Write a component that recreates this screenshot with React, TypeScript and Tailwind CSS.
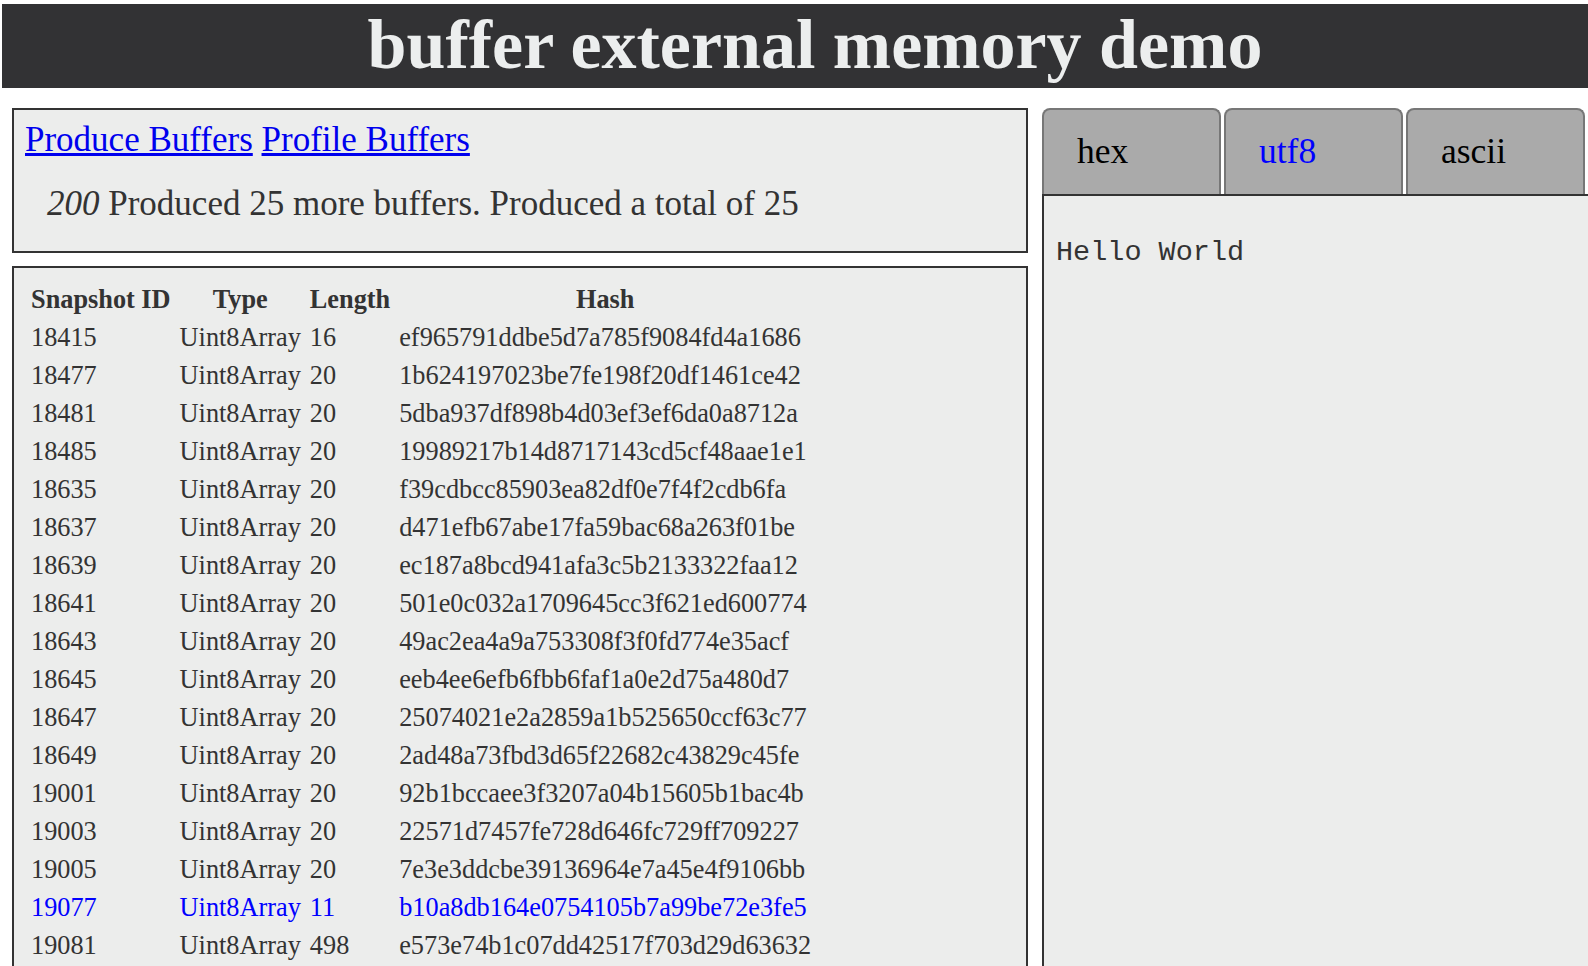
import React from "react";

type Row = { id: string; type: string; length: string; hash: string; active?: boolean };

const rows: Row[] = [
    { id: "18415", type: "Uint8Array", length: "16", hash: "ef965791ddbe5d7a785f9084fd4a1686" },
    { id: "18477", type: "Uint8Array", length: "20", hash: "1b624197023be7fe198f20df1461ce42" },
    { id: "18481", type: "Uint8Array", length: "20", hash: "5dba937df898b4d03ef3ef6da0a8712a" },
    { id: "18485", type: "Uint8Array", length: "20", hash: "19989217b14d8717143cd5cf48aae1e1" },
    { id: "18635", type: "Uint8Array", length: "20", hash: "f39cdbcc85903ea82df0e7f4f2cdb6fa" },
    { id: "18637", type: "Uint8Array", length: "20", hash: "d471efb67abe17fa59bac68a263f01be" },
    { id: "18639", type: "Uint8Array", length: "20", hash: "ec187a8bcd941afa3c5b2133322faa12" },
    { id: "18641", type: "Uint8Array", length: "20", hash: "501e0c032a1709645cc3f621ed600774" },
    { id: "18643", type: "Uint8Array", length: "20", hash: "49ac2ea4a9a753308f3f0fd774e35acf" },
    { id: "18645", type: "Uint8Array", length: "20", hash: "eeb4ee6efb6fbb6faf1a0e2d75a480d7" },
    { id: "18647", type: "Uint8Array", length: "20", hash: "25074021e2a2859a1b525650ccf63c77" },
    { id: "18649", type: "Uint8Array", length: "20", hash: "2ad48a73fbd3d65f22682c43829c45fe" },
    { id: "19001", type: "Uint8Array", length: "20", hash: "92b1bccaee3f3207a04b15605b1bac4b" },
    { id: "19003", type: "Uint8Array", length: "20", hash: "22571d7457fe728d646fc729ff709227" },
    { id: "19005", type: "Uint8Array", length: "20", hash: "7e3e3ddcbe39136964e7a45e4f9106bb" },
    { id: "19077", type: "Uint8Array", length: "11", hash: "b10a8db164e0754105b7a99be72e3fe5", active: true },
    { id: "19081", type: "Uint8Array", length: "498", hash: "e573e74b1c07dd42517f703d29d63632" },
];

const tabs = [
    { label: "hex", active: false },
    { label: "utf8", active: true },
    { label: "ascii", active: false },
];

export default function App() {
    return (
        <div className="h-[966px] overflow-hidden bg-white font-['Liberation_Serif','Times_New_Roman',serif] text-[#333]">
            {/* Title bar */}
            <header className="ml-[2px] mt-[4px] h-[84px] bg-[#323234] pl-[40px] pt-[6px] text-center">
                <h1 className="text-[70px] font-bold leading-[70px] text-[#eceeee]">buffer external memory demo</h1>
            </header>

            <div className="ml-[12px] mt-[20px] flex gap-[14px]">
                {/* Left column */}
                <div className="flex w-[1016px] shrink-0 flex-col gap-[13px]">
                    <div className="h-[145px] border-2 border-[#333] bg-[#ecedec] pl-[11px] pt-[10px] text-[35px] leading-[40px]">
                        <div>
                            <a href="#" className="text-[#0000ee] underline">Produce Buffers</a>{" "}
                            <a href="#" className="text-[#0000ee] underline">Profile Buffers</a>
                        </div>
                        <p className="mt-[24px] pl-[22px]">
                            <em>200</em> Produced 25 more buffers. Produced a total of 25
                        </p>
                    </div>

                    <div className="h-[720px] border-2 border-[#333] bg-[#ecedec] pl-[11px] pt-[11px]">
                        <table className="border-separate border-spacing-[3px] text-[26.3px] leading-[31px]">
                            <thead>
                                <tr>
                                    <th className="px-[3px] py-[2px] text-center font-bold">Snapshot ID</th>
                                    <th className="px-[3px] py-[2px] text-center font-bold">Type</th>
                                    <th className="px-[3px] py-[2px] text-center font-bold">Length</th>
                                    <th className="px-[3px] py-[2px] text-center font-bold">Hash</th>
                                </tr>
                            </thead>
                            <tbody>
                                {rows.map(row => (
                                    <tr key={row.id} className={row.active ? "text-[#0000ff]" : ""}>
                                        <td className="px-[3px] py-[2px] text-left">{row.id}</td>
                                        <td className="px-[3px] py-[2px] text-left">{row.type}</td>
                                        <td className="px-[3px] py-[2px] text-left">{row.length}</td>
                                        <td className="px-[3px] py-[2px] text-left">{row.hash}</td>
                                    </tr>
                                ))}
                            </tbody>
                        </table>
                    </div>
                </div>

                {/* Right column: encoding tabs */}
                <div className="flex min-w-0 flex-1 flex-col">
                    <div className="flex gap-[3px]">
                        {tabs.map(tab => (
                            <div
                                key={tab.label}
                                className={`h-[86px] w-[179px] rounded-t-[8px] border-2 border-b-0 border-[#777] bg-[#aaaaaa] pl-[33px] pt-[21px] text-[35.5px] leading-[40px] ${tab.active ? "text-[#0000ff]" : "text-black"}`}
                            >
                                {tab.label}
                            </div>
                        ))}
                    </div>
                    <div className="h-[800px] border-l-2 border-t-2 border-[#333] bg-[#ecedec] pl-[12px] pt-[40px]">
                        <pre className="font-['Liberation_Mono','Courier_New',monospace] text-[28.5px] leading-[33px] text-[#333]">Hello World</pre>
                    </div>
                </div>
            </div>
        </div>
    );
}
